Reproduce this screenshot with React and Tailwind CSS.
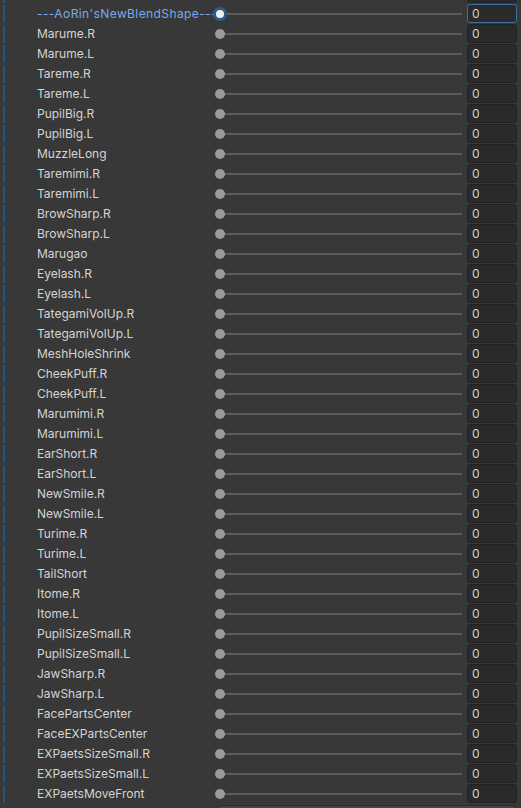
const names = [
  "Marume.R", "Marume.L", "Tareme.R", "Tareme.L", "PupilBig.R", "PupilBig.L", "MuzzleLong",
  "Taremimi.R", "Taremimi.L", "BrowSharp.R", "BrowSharp.L", "Marugao", "Eyelash.R", "Eyelash.L",
  "TategamiVolUp.R", "TategamiVolUp.L", "MeshHoleShrink", "CheekPuff.R", "CheekPuff.L",
  "Marumimi.R", "Marumimi.L", "EarShort.R", "EarShort.L", "NewSmile.R", "NewSmile.L",
  "Turime.R", "Turime.L", "TailShort", "Itome.R", "Itome.L", "PupilSizeSmall.R",
  "PupilSizeSmall.L", "JawSharp.R", "JawSharp.L", "FacePartsCenter", "FaceEXPartsCenter",
  "EXPaetsSizeSmall.R", "EXPaetsSizeSmall.L", "EXPaetsMoveFront",
];

function Row({ label, focused, value = "0" }) {
  return (
    <div className="flex h-[19px] mb-[1px] items-center">
      <div className="shrink-0 ml-[3px] w-[2px] h-[18px] bg-[#22567f]" />
      <div
        className={
          "shrink-0 w-[208px] pl-[32px] text-[12px] leading-none whitespace-nowrap " +
          (focused ? "text-[#79a8ee] tracking-[0.4px]" : "text-[#d4d4d4]")
        }
      >
        {label}
      </div>
      <div className="shrink-0 flex items-center w-[249px]">
        <div className="shrink-0 w-[14px] h-[14px] flex items-center justify-center z-10">
          {focused ? (
            <div className="w-[14px] h-[14px] rounded-full bg-[#2c5c8c] flex items-center justify-center">
              <div className="w-[8px] h-[8px] rounded-full bg-[#f0f0f0]" />
            </div>
          ) : (
            <div className="w-[10px] h-[10px] rounded-full bg-[#9a9a9a]" />
          )}
        </div>
        <div className="flex-1 h-[2px] ml-[-7px] bg-[#5c5c5c]" />
      </div>
      <div
        className={
          "shrink-0 ml-[5px] w-[50px] h-[19px] rounded-[3px] border flex items-center pl-[4px] text-[12px] text-[#d4d4d4] " +
          (focused ? "bg-[#2a2a2a] border-[#3b6fa3]" : "bg-[#2a2a2a] border-[#222222]")
        }
      >
        {value}
      </div>
    </div>
  );
}

export default function App() {
  return (
    <div
      className="w-[521px] h-[808px] overflow-hidden bg-[#383838]"
      style={{ fontFamily: "Inter, 'Noto Sans', sans-serif" }}
    >
      <div className="mt-[-16px]">
        <Row label="" value="" />
        <Row label="---AoRin'sNewBlendShape---" focused />
        {names.map((n) => (
          <Row key={n} label={n} />
        ))}
        <div className="ml-[217px] mr-[5px] mt-[2px] h-[20px] rounded-[3px] border border-[#2a2a2a] bg-[#454545]" />
      </div>
    </div>
  );
}
